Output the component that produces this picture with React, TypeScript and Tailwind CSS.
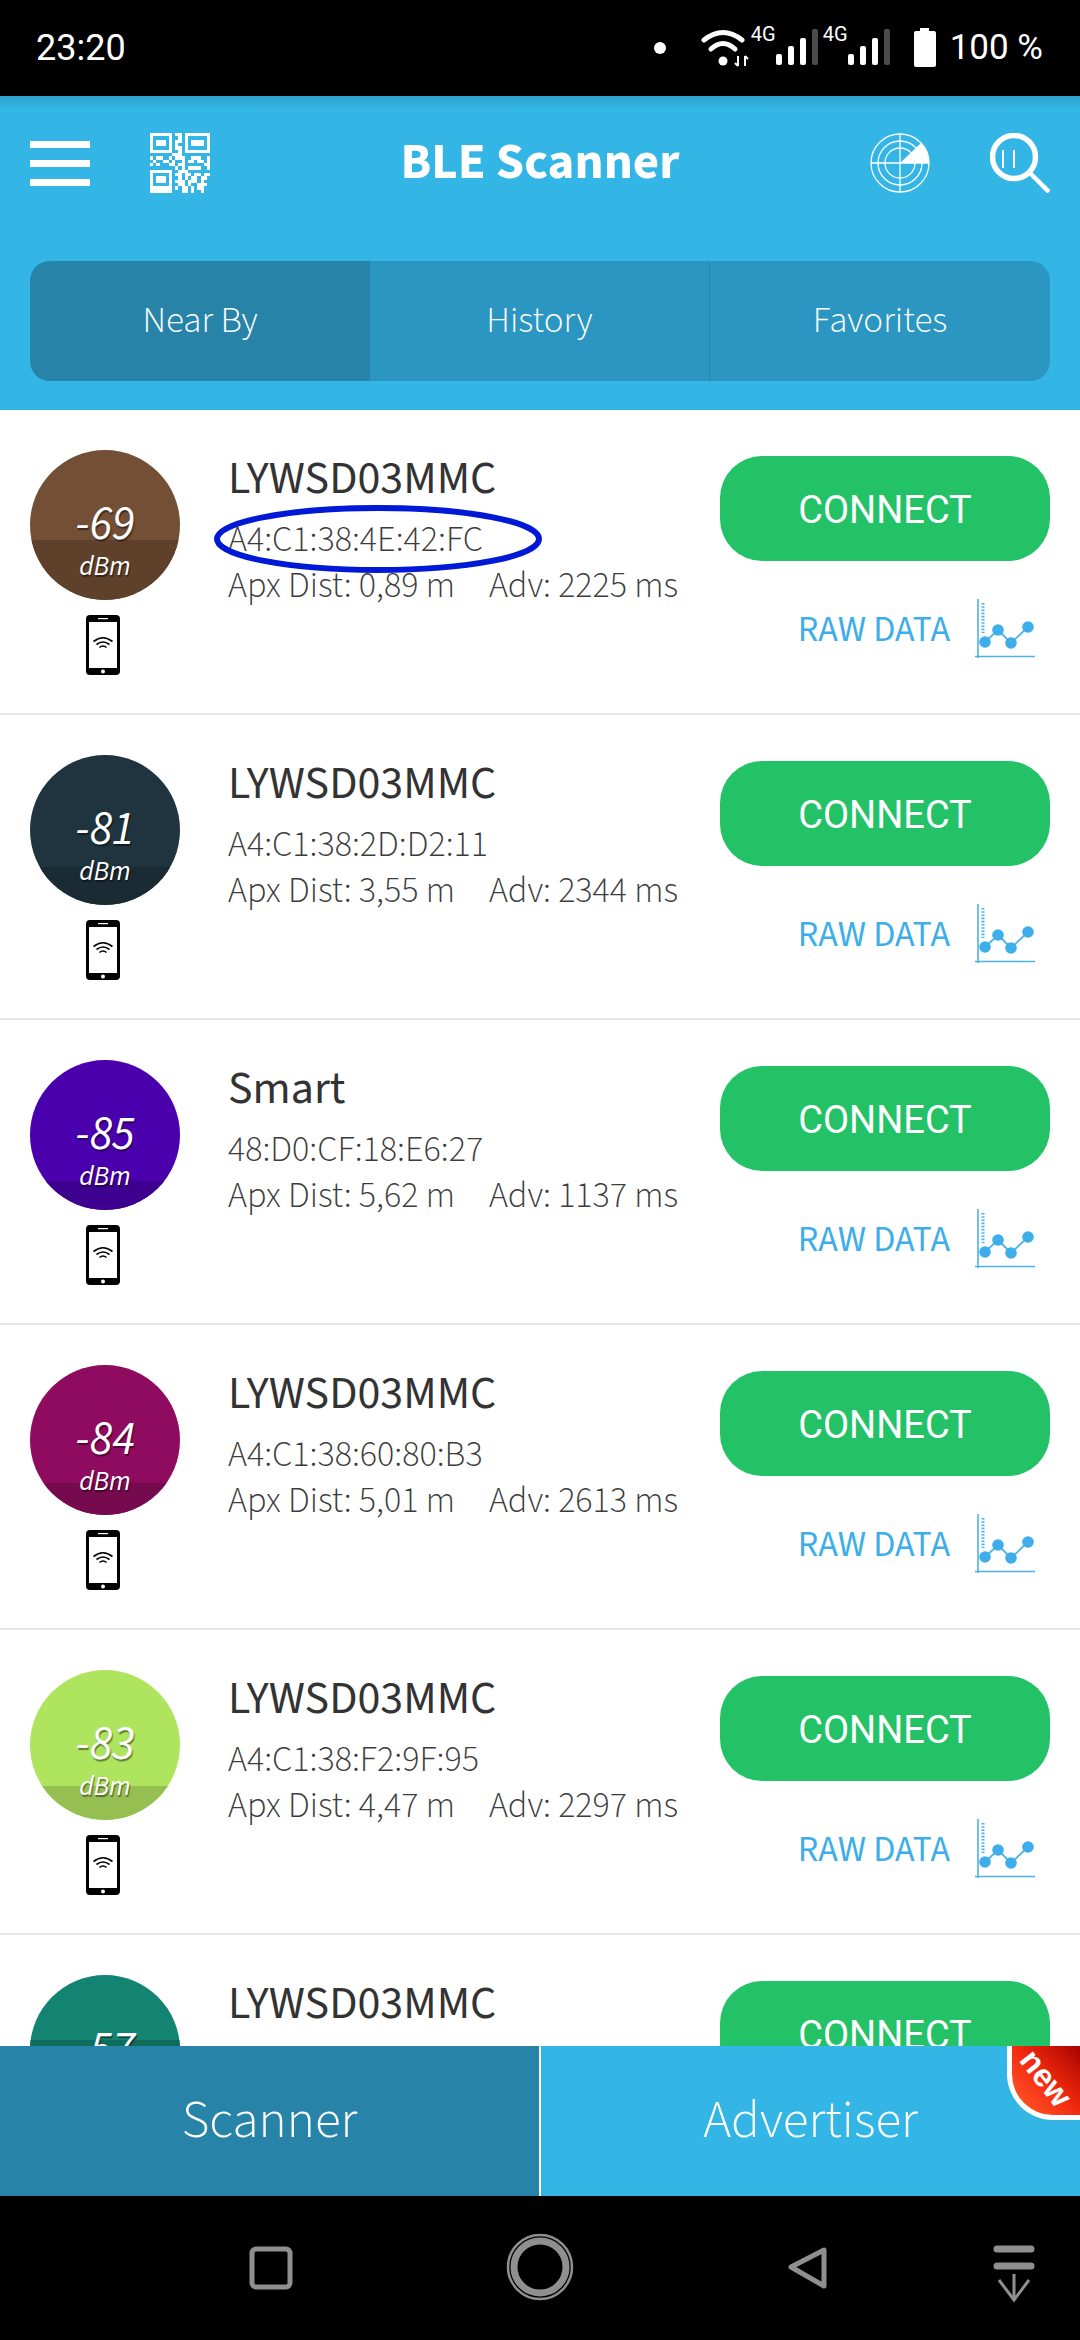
const sans = "font-['Source_Sans_3','Source_Sans_Pro','Noto_Sans',sans-serif]";

interface Device {
  name: string;
  mac: string;
  dist: string;
  adv: string;
  rssi: string;
  color: string;
  dark: string;
  band: number;
}

const devices: Device[] = [
  { name: 'LYWSD03MMC', mac: 'A4:C1:38:4E:42:FC', dist: '0,89', adv: '2225', rssi: '-69', color: '#734f36', dark: '#5f402b', band: 90 },
  { name: 'LYWSD03MMC', mac: 'A4:C1:38:2D:D2:11', dist: '3,55', adv: '2344', rssi: '-81', color: '#20343f', dark: '#1a2b33', band: 112 },
  { name: 'Smart', mac: '48:D0:CF:18:E6:27', dist: '5,62', adv: '1137', rssi: '-85', color: '#4b00ae', dark: '#3e008f', band: 121 },
  { name: 'LYWSD03MMC', mac: 'A4:C1:38:60:80:B3', dist: '5,01', adv: '2613', rssi: '-84', color: '#8f0b5f', dark: '#750a4e', band: 118 },
  { name: 'LYWSD03MMC', mac: 'A4:C1:38:F2:9F:95', dist: '4,47', adv: '2297', rssi: '-83', color: '#aee45e', dark: '#96bf52', band: 116 },
  { name: 'LYWSD03MMC', mac: 'A4:C1:38:11:7A:30', dist: '0,41', adv: '1980', rssi: '-57', color: '#138372', dark: '#0f6b5d', band: 65 },
];

const QR_ROWS = [
  '1111111011011111111',
  '1000001001010000001',
  '1011101011010111101',
  '1011101010010111101',
  '1000001011010000001',
  '1111111001011111111',
  '0000000111000000000',
  '1011001011100111001',
  '0100110100101101101',
  '1010001101100000011',
  '0000000010101111001',
  '1111111001110000000',
  '1000001011011011011',
  '1011101001010110110',
  '1011101011101110100',
  '1000001001101001110',
  '1111111010110101100',
  '1111111000110100100',
];

const QrIcon = () => (
  <svg viewBox="0 0 19 18" className="w-[60px] h-[60px]" shapeRendering="crispEdges" preserveAspectRatio="none">
    {QR_ROWS.map((row, y) =>
      row.split('').map((c, x) => (c === '1' ? <rect key={`${x}-${y}`} x={x} y={y} width="1.02" height="1.02" fill="#fff" /> : null)),
    )}
  </svg>
);

const RadarIcon = () => (
  <svg viewBox="0 0 60 60" className="w-[60px] h-[60px]" fill="none" stroke="#fff" strokeWidth="1.3">
    <circle cx="30" cy="30" r="29" />
    <circle cx="30" cy="30" r="22" />
    <circle cx="30" cy="30" r="15" />
    <path d="M30 1v58M1 30h58" />
    <path d="M30 30L51 10A29 29 0 0 1 59 30Z" fill="#fff" stroke="none" />
  </svg>
);

const SearchIcon = () => (
  <svg viewBox="0 0 60 60" className="w-[60px] h-[60px]" fill="none" stroke="#fff">
    <circle cx="24" cy="24" r="21.5" strokeWidth="5.5" />
    <path d="M40 40L59 59" strokeWidth="4.5" />
    <path d="M13 17v18M24 17v18" strokeWidth="2" />
  </svg>
);

const PhoneIcon = () => (
  <svg viewBox="0 0 34 60" className="w-[34px] h-[60px]">
    <rect x="0" y="0" width="34" height="60" rx="4" fill="#000" />
    <rect x="3" y="7" width="28" height="46" fill="#fff" />
    <rect x="12" y="3" width="10" height="1.2" fill="#fff" />
    <circle cx="17" cy="56.5" r="2" fill="#fff" />
    <g fill="none" stroke="#000" strokeWidth="1.6">
      <path d="M7.5 26.5Q17 19 26.5 26.5" />
      <path d="M10.5 29.5Q17 24.5 23.5 29.5" />
      <path d="M13.5 32.5Q17 29.5 20.5 32.5" />
    </g>
  </svg>
);

const ChartIcon = () => (
  <svg viewBox="0 0 60 60" className="w-[60px] h-[60px]" fill="#3daee9">
    <path d="M3 0v59M0 57.5h60" stroke="#4db2e8" strokeWidth="1.6" />
    <path d="M8 4v30" stroke="#4db2e8" strokeWidth="3" strokeDasharray="1.6 1.6" />
    <path d="M10 43L23 31L36 44L53 28" stroke="#4db2e8" strokeWidth="1.8" fill="none" />
    <circle cx="10" cy="43" r="5.8" />
    <circle cx="23" cy="31" r="5.8" />
    <circle cx="36" cy="44" r="5.8" />
    <circle cx="53" cy="28" r="5.8" />
  </svg>
);

const StatusBars = () => (
  <div className="flex items-end gap-[6px] h-[36px] mt-[10px]">
    <div className="w-[6px] h-[11px] bg-white rounded-[2px]" />
    <div className="w-[6px] h-[19px] bg-white rounded-[2px]" />
    <div className="w-[6px] h-[27px] bg-white rounded-[2px]" />
    <div className="w-[6px] h-[36px] bg-[#4a4a4a] rounded-[2px]" />
  </div>
);

const DeviceRow = ({ d }: { d: Device }) => (
  <div className="h-[305px] shrink-0 border-b-2 border-[#e6e6e6] bg-white flex px-[30px] pt-[40px]">
    <div className="w-[150px] shrink-0 flex flex-col items-center">
      <div className="relative w-[150px] h-[150px] rounded-full overflow-hidden" style={{ backgroundColor: d.color }}>
        <div className="absolute left-0 right-0 bottom-0" style={{ top: d.band, backgroundColor: d.dark }} />
        <div className="absolute inset-0 flex flex-col items-center text-white italic font-normal [text-shadow:1px_2px_1px_rgba(0,0,0,0.45)]">
          <span className="text-[47px] leading-[50px] mt-[50px]">{d.rssi}</span>
          <span className="text-[27px] leading-[30px] mt-[2px]">dBm</span>
        </div>
      </div>
      <div className="mt-[15px] mr-[5px] flex">
        <PhoneIcon />
      </div>
    </div>
    <div className="ml-[48px] flex-1 min-w-0 font-light text-[#3c3c3c]">
      <div className="text-[46px] leading-[50px] text-[#333] font-normal mt-[4px]">{d.name}</div>
      <div className="text-[36px] leading-[44px] mt-[14px] whitespace-nowrap">{d.mac}</div>
      <div className="text-[36px] leading-[44px] flex gap-[34px] mt-[2px] whitespace-nowrap">
        <span>Apx Dist: {d.dist} m</span>
        <span>Adv: {d.adv} ms</span>
      </div>
    </div>
    <div className="w-[330px] shrink-0 flex flex-col items-end pt-[6px]">
      <button className="w-[330px] h-[105px] rounded-[42px] bg-[#23c266] text-white text-[38px] pt-[3px] font-['Roboto',sans-serif]">CONNECT</button>
      <div className="flex items-center mt-[37px] mr-[15px] gap-[25px] text-[#3daee9] text-[36px]">
        <span className="leading-[60px] pt-[2px]">RAW DATA</span>
        <ChartIcon />
      </div>
    </div>
  </div>
);

const App = () => {
  return (
    <div className={`w-[1080px] h-[2340px] flex flex-col overflow-hidden bg-white ${sans}`}>
      <div className="h-[96px] shrink-0 bg-black text-white font-['Roboto',sans-serif] flex items-start pl-[36px] pr-[37px] pt-[18px]">
        <span className="text-[36px] leading-[60px]">23:20</span>
        <div className="ml-auto flex items-start">
          <div className="w-[12px] h-[12px] rounded-full bg-white mt-[24px]" />
          <svg viewBox="0 0 48 40" className="w-[48px] h-[40px] ml-[35px] mt-[10px]" fill="none" stroke="#fff" strokeWidth="5" strokeLinecap="round">
            <path d="M3 12Q22 -3 41 12" />
            <path d="M10 21Q22 10 34 21" />
            <circle cx="22" cy="33" r="4.5" fill="#fff" stroke="none" />
            <path d="M37 28v10M44 28v10M37 38l-3 -3M44 28l3 3" strokeWidth="2" strokeLinecap="butt" />
          </svg>
          <span className="w-[21px] text-[20px] leading-[20px] ml-[2px] mt-[6px]">4G</span>
          <div className="ml-[4px] mt-[1px]"><StatusBars /></div>
          <span className="w-[21px] text-[20px] leading-[20px] ml-[5px] mt-[6px]">4G</span>
          <div className="ml-[4px] mt-[1px]"><StatusBars /></div>
          <svg viewBox="0 0 24 39" className="w-[24px] h-[39px] ml-[23px] mt-[10px]" fill="#fff">
            <path d="M7 0h9v3h5a2 2 0 0 1 2 2v32a2 2 0 0 1-2 2H3a2 2 0 0 1-2-2V5a2 2 0 0 1 2-2h4z" />
          </svg>
          <span className="text-[35px] leading-[60px] ml-[13px]">100 %</span>
        </div>
      </div>

      <div className="h-[314px] shrink-0 bg-[#33b5e5] relative flex flex-col px-[30px]">
        <div className="absolute top-0 left-0 right-0 h-[12px] bg-gradient-to-b from-[#2ea0cc] to-[#33b5e5]" />
        <div className="relative flex items-center h-[60px] mt-[37px]">
          <div className="w-[60px] flex flex-col gap-[12px]">
            <div className="h-[7px] bg-white" />
            <div className="h-[7px] bg-white" />
            <div className="h-[7px] bg-white" />
          </div>
          <div className="ml-[60px]"><QrIcon /></div>
          <div className="flex-1 text-center text-white text-[51px] font-bold leading-[60px] -mt-[2px]">BLE Scanner</div>
          <RadarIcon />
          <div className="ml-[60px]"><SearchIcon /></div>
        </div>
        <div className="relative mt-[68px] h-[120px] rounded-[20px] overflow-hidden flex text-white text-[37px] font-light">
          <div className="w-[340px] bg-[#2783a8] flex items-center justify-center">Near By</div>
          <div className="w-[339px] bg-[#2b96c1] flex items-center justify-center">History</div>
          <div className="w-[341px] bg-[#2b96c1] border-l border-[#2783a8] flex items-center justify-center">Favorites</div>
        </div>
      </div>

      <div className="flex-1 min-h-0 overflow-hidden relative">
        {devices.map((d, i) => (
          <DeviceRow key={i} d={d} />
        ))}
        <svg viewBox="0 0 330 90" className="absolute left-[213px] top-[84px] w-[330px] h-[90px] overflow-visible" fill="none">
          <ellipse cx="165" cy="45" rx="161" ry="31" stroke="#0019d6" strokeWidth="6" />
        </svg>
      </div>

      <div className="h-[150px] shrink-0 flex text-white text-[53px] font-light relative overflow-hidden">
        <div className="w-[539px] bg-[#2783a8] flex items-center justify-center">Scanner</div>
        <div className="w-[2px] bg-white" />
        <div className="flex-1 bg-[#33b5e5] flex items-center justify-center">Advertiser</div>
        <div className="absolute right-0 top-0 w-[73px] h-[74px] overflow-hidden rounded-bl-[46px] border-l-[5px] border-b-[5px] border-white bg-gradient-to-tr from-[#ff5a2a] via-[#f52a10] to-[#a80000] flex items-center justify-center">
          <span className="text-white text-[32px] font-bold rotate-[52deg] leading-none -mt-[6px] font-['Liberation_Sans',sans-serif]">new</span>
        </div>
      </div>

      <div className="h-[144px] shrink-0 bg-black">
        <svg viewBox="0 0 1080 144" className="w-[1080px] h-[144px]" fill="none" stroke="#8f8f8f">
          <rect x="252" y="53" width="38" height="38" rx="4" strokeWidth="5" />
          <circle cx="540" cy="71" r="26" strokeWidth="7" />
          <circle cx="540" cy="71" r="32" strokeWidth="2.5" />
          <path d="M824 54v36L791 71z" strokeWidth="5" strokeLinejoin="round" />
          <path d="M997 53h34M997 70h34" strokeWidth="7" strokeLinecap="round" />
          <path d="M1014 78v26M999 84L1014 104L1029 84" strokeWidth="3" />
        </svg>
      </div>
    </div>
  );
};

export default App;
